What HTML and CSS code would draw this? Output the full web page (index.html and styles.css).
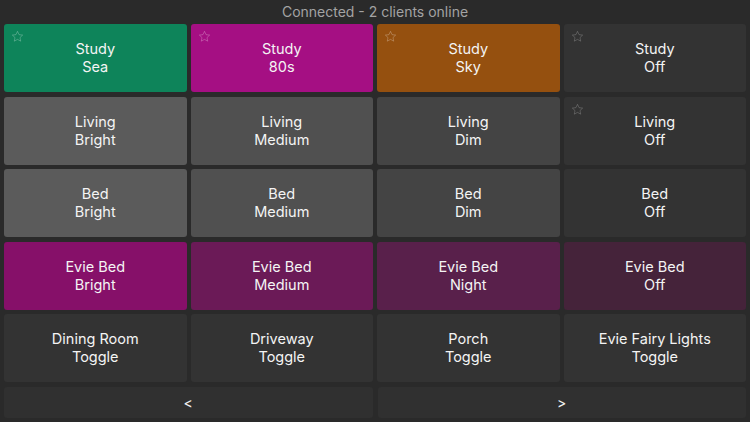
FILE: index.html
```html
<!DOCTYPE html>
<html>
<head>
<meta charset="utf-8">
<link rel="stylesheet" href="styles.css">
</head>
<body>
<div class="app">
  <div class="status">Connected - 2 clients online</div>
  <div class="grid">
    <div class="tile t-green"><svg class="star" viewBox="0 0 24 24"><path d="M12 2.5l2.9 6.1 6.6.8-4.9 4.6 1.3 6.6L12 17.3l-5.9 3.3 1.3-6.6-4.9-4.6 6.6-.8z"/></svg><span>Study<br>Sea</span></div>
    <div class="tile t-magenta"><svg class="star" viewBox="0 0 24 24"><path d="M12 2.5l2.9 6.1 6.6.8-4.9 4.6 1.3 6.6L12 17.3l-5.9 3.3 1.3-6.6-4.9-4.6 6.6-.8z"/></svg><span>Study<br>80s</span></div>
    <div class="tile t-orange"><svg class="star" viewBox="0 0 24 24"><path d="M12 2.5l2.9 6.1 6.6.8-4.9 4.6 1.3 6.6L12 17.3l-5.9 3.3 1.3-6.6-4.9-4.6 6.6-.8z"/></svg><span>Study<br>Sky</span></div>
    <div class="tile t-off"><svg class="star" viewBox="0 0 24 24"><path d="M12 2.5l2.9 6.1 6.6.8-4.9 4.6 1.3 6.6L12 17.3l-5.9 3.3 1.3-6.6-4.9-4.6 6.6-.8z"/></svg><span>Study<br>Off</span></div>

    <div class="tile t-bright"><span>Living<br>Bright</span></div>
    <div class="tile t-medium"><span>Living<br>Medium</span></div>
    <div class="tile t-dim"><span>Living<br>Dim</span></div>
    <div class="tile t-off"><svg class="star" viewBox="0 0 24 24"><path d="M12 2.5l2.9 6.1 6.6.8-4.9 4.6 1.3 6.6L12 17.3l-5.9 3.3 1.3-6.6-4.9-4.6 6.6-.8z"/></svg><span>Living<br>Off</span></div>

    <div class="tile t-bright"><span>Bed<br>Bright</span></div>
    <div class="tile t-medium"><span>Bed<br>Medium</span></div>
    <div class="tile t-dim"><span>Bed<br>Dim</span></div>
    <div class="tile t-off"><span>Bed<br>Off</span></div>

    <div class="tile t-evie1"><span>Evie Bed<br>Bright</span></div>
    <div class="tile t-evie2"><span>Evie Bed<br>Medium</span></div>
    <div class="tile t-evie3"><span>Evie Bed<br>Night</span></div>
    <div class="tile t-evie4"><span>Evie Bed<br>Off</span></div>

    <div class="tile t-off"><span>Dining Room<br>Toggle</span></div>
    <div class="tile t-off"><span>Driveway<br>Toggle</span></div>
    <div class="tile t-off"><span>Porch<br>Toggle</span></div>
    <div class="tile t-off"><span>Evie Fairy Lights<br>Toggle</span></div>
  </div>
  <div class="nav">
    <div class="navbtn">&lt;</div>
    <div class="navbtn">&gt;</div>
  </div>
</div>
</body>
</html>
```
FILE: styles.css
```css
html, body {
  margin: 0;
  padding: 0;
  background: #2a2a2a;
}
body {
  width: 750px;
  height: 422px;
  overflow: hidden;
  font-family: Inter, "Noto Sans", sans-serif;
  color: #f2f2f2;
}
.app {
  display: flex;
  flex-direction: column;
  padding: 0 4px;
}
.status {
  height: 24px;
  line-height: 24px;
  text-align: center;
  font-size: 14px;
  color: #a3a3a3;
}
.grid {
  display: grid;
  grid-template-columns: repeat(4, 1fr);
  grid-auto-rows: 68px;
  column-gap: 4px;
  row-gap: 4.5px;
}
.tile {
  position: relative;
  border-radius: 3px;
  display: flex;
  align-items: center;
  justify-content: center;
  text-align: center;
  font-size: 14.5px;
  line-height: 18px;
  color: #f4f4f4;
}
.star {
  position: absolute;
  left: 7px;
  top: 6px;
  width: 13px;
  height: 13px;
  fill: none;
  stroke: rgba(255, 255, 255, 0.28);
  stroke-width: 1.6;
  stroke-linejoin: round;
}
.t-off .star {
  stroke: rgba(255, 255, 255, 0.22);
}
.t-green { background: #0e845a; }
.t-magenta { background: #a50f83; }
.t-orange { background: #95500f; }
.t-off { background: #333333; }
.t-bright { background: #5b5b5b; }
.t-medium { background: #505050; }
.t-dim { background: #444444; }
.t-evie1 { background: #861069; }
.t-evie2 { background: #6b1a57; }
.t-evie3 { background: #59204b; }
.t-evie4 { background: #45233a; }
.nav {
  display: grid;
  grid-template-columns: 1fr 1fr;
  column-gap: 5px;
  margin-top: 4.5px;
}
.navbtn {
  height: 31px;
  background: #303030;
  border-radius: 3px;
  display: flex;
  align-items: center;
  justify-content: center;
  font-size: 14px;
  color: #f0f0f0;
}
```
